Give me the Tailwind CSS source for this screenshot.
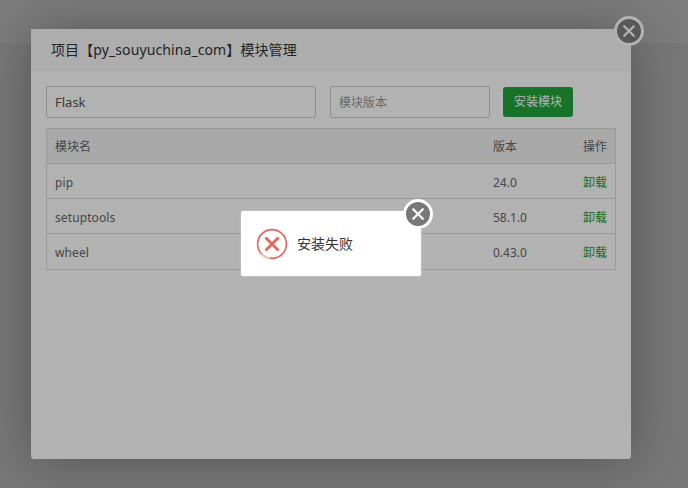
<!DOCTYPE html>
<html lang="zh">
<head>
<meta charset="utf-8">
<script src="https://cdn.jsdelivr.net/npm/@tailwindcss/browser@4"></script>
</head>
<body class="m-0 h-[488px] w-[688px] overflow-hidden bg-[#f5f5f5] font-['Noto_Sans','Noto_Sans_CJK_SC',sans-serif]">
<div class="relative h-[488px] w-[688px] overflow-hidden">
  <div class="h-[43px] bg-white"></div>

  <div class="absolute inset-0 bg-black/30"></div>

  <section class="absolute left-[31px] top-[29px] flex h-[430px] w-[600px] flex-col rounded-[3px] bg-white shadow-[1px_1px_50px_rgba(0,0,0,0.3)]">
    <header class="flex h-[42px] items-center border-b border-[#eeeeee] bg-[#f8f8f8] pl-5 text-[14px] tracking-[0.1px] text-[#333333]">项目【py_souyuchina_com】模块管理</header>
    <div class="flex flex-col gap-[10px] px-[15px] pt-[15px]">
      <div class="flex h-[32px] items-center">
        <input class="h-[32px] w-[270px] rounded-[2px] border border-[#cccccc] px-2 text-[13px] text-[#555555]" value="Flask">
        <input class="ml-[14px] h-[32px] w-[160px] rounded-[2px] border border-[#cccccc] px-2 text-[12px] text-[#555555] placeholder:text-[#999999]" placeholder="模块版本">
        <button class="ml-[13px] h-[30px] w-[70px] rounded-[3px] bg-[#20a53a] text-[12px] text-white">安装模块</button>
      </div>
      <div class="w-[570px] border border-[#dddddd] text-[12px] text-[#666666]">
        <div class="flex h-[35px] items-center border-b border-[#dddddd] bg-[#f2f2f2] px-2 pt-[2px]"><span class="flex-1">模块名</span><span class="w-[90px]">版本</span><span>操作</span></div>
        <div class="flex h-[35px] items-center border-b border-[#dddddd] px-2 pt-[3px]"><span class="flex-1 tracking-[0.1px]">pip</span><span class="w-[90px]">24.0</span><span class="text-[#1c9a35]">卸载</span></div>
        <div class="flex h-[35px] items-center border-b border-[#dddddd] px-2 pt-[3px]"><span class="flex-1 tracking-[0.1px]">setuptools</span><span class="w-[90px]">58.1.0</span><span class="text-[#1c9a35]">卸载</span></div>
        <div class="flex h-[35px] items-center px-2 pt-[2px]"><span class="flex-1 tracking-[0.1px]">wheel</span><span class="w-[90px]">0.43.0</span><span class="text-[#1c9a35]">卸载</span></div>
      </div>
    </div>
    <button class="absolute right-[-13px] top-[-13px] flex h-[30px] w-[30px] items-center justify-center rounded-full border-[3px] border-white bg-[#7f7f7f]">
      <svg width="14" height="14" viewBox="0 0 14 14" fill="none" stroke="white" stroke-width="2.2" stroke-linecap="round"><path d="M2.2 2.2 11.8 11.8M11.8 2.2 2.2 11.8"/></svg>
    </button>
  </section>

  <div class="absolute inset-0 bg-black/30"></div>

  <section class="absolute left-[241px] top-[211px] flex h-[65px] w-[180px] items-center gap-[9px] rounded-[2px] bg-white pl-[15px] shadow-[0_0_2px_rgba(255,255,255,0.6)]">
    <svg width="32" height="32" viewBox="0 0 32 32" fill="none" stroke="#e8635a">
      <circle cx="16" cy="16" r="14.4" stroke-width="1.6"/>
      <path d="M5.5 26A14.4 14.4 0 0 0 14 30.3" stroke="#f6c4bf" stroke-width="2"/>
      <path d="M9.5 9.5 22.5 22.5M22.5 9.5 9.5 22.5" stroke-width="2.8"/>
    </svg>
    <span class="text-[14px] text-[#333333]">安装失败</span>
    <button class="absolute right-[-12px] top-[-12px] flex h-[30px] w-[30px] items-center justify-center rounded-full border-[3px] border-white bg-[#787878]">
      <svg width="14" height="14" viewBox="0 0 14 14" fill="none" stroke="white" stroke-width="2.2" stroke-linecap="round"><path d="M2.2 2.2 11.8 11.8M11.8 2.2 2.2 11.8"/></svg>
    </button>
  </section>
</div>
</body>
</html>
